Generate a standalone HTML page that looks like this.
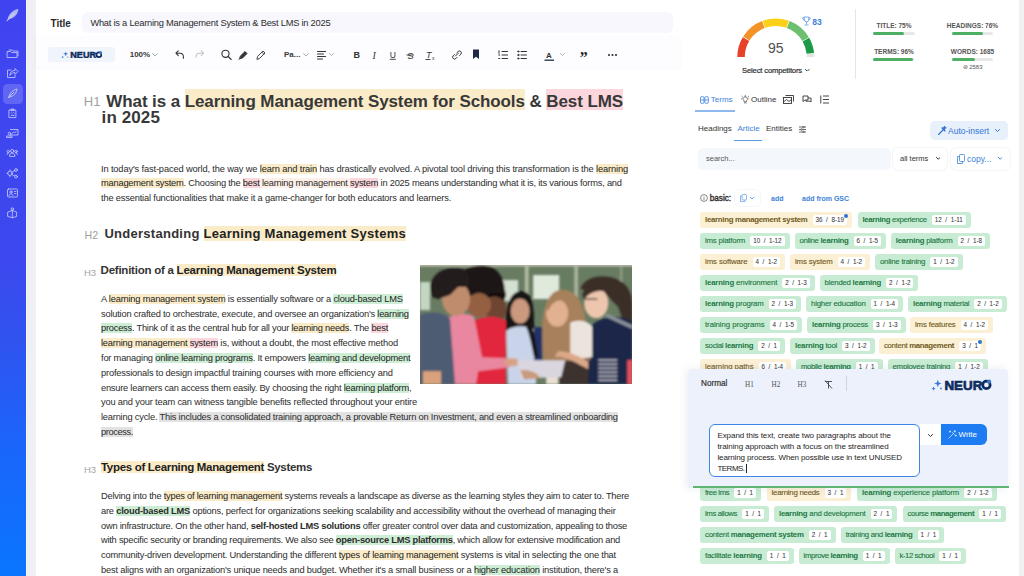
<!DOCTYPE html><html><head><meta charset="utf-8"><style>
*{margin:0;padding:0;box-sizing:border-box}
html,body{width:1024px;height:576px;overflow:hidden;background:#fff;font-family:'Liberation Sans',sans-serif;}
.a{position:absolute}
.bt{position:absolute;white-space:nowrap;font-size:9.3px;line-height:10px;color:#2c2c2c}
.hy{background:#fbecc9;color:#222}
.hg{background:#cdeed5;color:#222}
.hp{background:#fbd6dc;color:#222}
.hl{background:#fdf0e8}
.hs{background:#e2e2e2}
.hb{font-weight:bold}
.hgb{font-weight:bold;background:#cdeed5}
.hd{position:absolute;white-space:nowrap;font-weight:bold;color:#333}
.h1{font-size:17px;line-height:21px}
.h1{color:#383838}
.h1 .hy,.h1 .hp{padding-top:2.5px;background-repeat:no-repeat;background-size:100% calc(100% - 1px)}
.h1 .hy{background-color:transparent;background-image:linear-gradient(#fbecc9,#fbecc9);color:#383838}
.h1 .hp{background-color:transparent;background-image:linear-gradient(#fbd6dc,#fbd6dc);color:#383838}
.h2{font-size:13px;line-height:16px}
.h3{font-size:11.5px;line-height:14px}
.lab{position:absolute;color:#a9a9a9;white-space:nowrap}
.chip{position:absolute;height:16px;border-radius:3px;white-space:nowrap}
.chip .lb{position:absolute;left:5px;top:0;line-height:16px;font-size:7.8px;-webkit-text-stroke:0.12px currentColor}
.chip .lb .hb{-webkit-text-stroke:0}
.chip .ct{position:absolute;right:5px;top:3px;height:9.5px;line-height:9.5px;background:#fff;border-radius:2px;font-size:6.3px;color:#3a3a3a;padding:0 3px;-webkit-text-stroke:0.05px #333;word-spacing:1.8px}
.cy{background:#fbefd4}
.cy .lb{color:#6f5a1c}
.cg{background:#c8ebd3}
.cg .lb{color:#217843}
.dot{position:absolute;width:4px;height:4px;border-radius:2px;background:#2f72d8}
</style></head><body>
<div class="a" style="left:0;top:0;width:26px;height:576px;background:linear-gradient(180deg,#4044f0 0%,#3d48ee 45%,#2f54f0 60%,#1a66fb 78%,#0a76fe 100%)"></div>
<div class="a" style="left:26px;top:0;width:10px;height:576px;background:#eff0f4"></div>
<div class="a" style="left:26px;top:0;width:1px;height:576px;background:#f4f6fb"></div>
<div class="a" style="left:3px;top:84px;width:19.5px;height:19.5px;border-radius:4.5px;background:rgba(255,255,255,0.18)"></div>
<svg class="a" style="left:0;top:0" width="26" height="230" viewBox="0 0 26 230">
<g fill="none" stroke="#dfe4ff" stroke-width="0.75" stroke-linecap="round" stroke-linejoin="round" opacity="0.92">
<!-- top feather logo filled -->
<path d="M7.8 19.8 C8.5 15.5 11.5 11 18 9.3 C17.6 13.8 14.8 17.5 9.8 18.6 Z" fill="#b8c2ea" stroke="#d5dcfa" stroke-width="0.5"/>
<path d="M6.8 21 L14.5 13.2" stroke="#eef1ff" stroke-width="0.9"/>
<!-- folder -->
<path d="M7.5 51.5 h3 l1 1 h5.5 v5 h-9.5 z"/>
<path d="M9 50 h3 l1 1 h5 v5"/>
<!-- share -->
<path d="M11 70 h-3.5 v7.5 h7.5 v-2"/>
<path d="M10 75 c0-3 2-4.5 5-4.5 v-2 l3 3 -3 3 v-2 c-2 0-3.5 1-5 2.5z"/>
<!-- feather active -->
<path d="M9 97 C9.5 93.5 12.5 90 17 89 C16.5 93 14 96 10.5 96.8 Z"/>
<path d="M8.3 97.8 L13.8 92.2"/>
<!-- clipboard -->
<path d="M9.3 110 h6.6 v7.6 h-6.6 z"/>
<path d="M11.3 109 h2.6 v1.6 h-2.6 z"/>
<path d="M11.2 112.6 l.8 .8 M13.6 112.6 l.6 .6 M11.2 115.4 h3"/>
<!-- presentation -->
<path d="M10.5 129.5 h7.5 v5.5 h-7.5"/>
<path d="M12 133.5 l1.5-1.5 1 1 2-2"/>
<circle cx="9.5" cy="133.5" r="1.3"/>
<path d="M7 137.5 h5 v-1.5 h-5 z"/>
<!-- people -->
<circle cx="12.2" cy="151" r="1.6"/>
<circle cx="8.3" cy="151.5" r="1.2"/>
<circle cx="16.1" cy="151.5" r="1.2"/>
<path d="M9.5 156 c0-2 1.2-2.8 2.7-2.8 s2.7 .8 2.7 2.8 z"/>
<path d="M7 154.5 c0-1 .6-1.5 1.5-1.5 M17.4 154.5 c0-1-.6-1.5-1.5-1.5"/>
<!-- network -->
<circle cx="10" cy="173.3" r="2.2"/>
<circle cx="16" cy="170" r="1.4"/>
<circle cx="16" cy="176.6" r="1.4"/>
<path d="M11.8 172.2 L14.7 170.6 M11.8 174.4 L14.7 176 M7 173.3 h.8 M10 169.8 v.8 M10 176 v.8"/>
<!-- id card -->
<rect x="7.5" y="189" width="10" height="8" rx="1"/>
<circle cx="11" cy="192" r="1.2"/>
<path d="M9 195.5 c.5-1.2 1-1.6 2-1.6 s1.5 .4 2 1.6 M14.5 191.5 h1.5 M14.5 193.5 h1.5"/>
<!-- box person -->
<circle cx="12.3" cy="209" r="1.2"/>
<path d="M8 212 l4.3-1.5 4.3 1.5 v4.5 l-4.3 1.2 -4.3-1.2 z M12.3 210.5 v7.2"/>
</g></svg>
<div class="a" style="left:50.5px;top:18px;font-size:10px;line-height:11px;font-weight:bold;color:#2a2a2a">Title</div>
<div class="a" style="left:81.7px;top:12px;width:591px;height:21px;border-radius:6px;background:#f7f7fd"></div>
<div id="title" class="bt" style="left:90.4px;top:18.20px;letter-spacing:-0.231px">What is a Learning Management System &amp; Best LMS in 2025</div>
<div class="a" style="left:36px;top:37px;width:644px;height:30px;background:#fdfdff;box-shadow:0 1px 3px rgba(150,160,190,0.10)"></div>
<div class="a" style="left:48px;top:47px;width:66.7px;height:14.5px;border-radius:3px;background:#f0f4fb"></div>
<svg class="a" style="left:60.8px;top:50.78px" width="41.4" height="7.4399999999999995" viewBox="0 0 62 12" preserveAspectRatio="none">
<path d="M7 0.8 L8 3.6 L10.8 4.6 L8 5.6 L7 8.4 L6 5.6 L3.2 4.6 L6 3.6Z" fill="#3b7ad6"/>
<path d="M2.6 7.6 L3.2 9.2 L4.8 9.8 L3.2 10.4 L2.6 12 L2 10.4 L0.4 9.8 L2 9.2Z" fill="#3b7ad6"/>
<circle cx="10.2" cy="9.6" r="0.9" fill="#3b7ad6"/>
<text x="13.8" y="11" font-family="Liberation Sans" font-weight="bold" font-size="13.7" fill="#0e2c5e" stroke="#0e2c5e" stroke-width="0.7">NEUR</text>
<circle cx="56.8" cy="6" r="3.8" fill="none" stroke="#0e2c5e" stroke-width="2.8"/>
<circle cx="59.6" cy="2.6" r="2.1" fill="#3b7ad6"/>
</svg>
<div class="a" style="left:129.7px;top:50px;font-size:8px;line-height:10px;font-weight:bold;color:#3a3a3a">100%</div>
<svg class="a" style="left:151.5px;top:53.3px" width="6" height="3.5999999999999996" viewBox="0 0 10 6"><path d="M1 1 L5 5 L9 1" fill="none" stroke="#999" stroke-width="1.3333333333333333" stroke-linecap="round" stroke-linejoin="round"/></svg>
<svg class="a" style="left:0;top:40px" width="680" height="30" viewBox="0 40 680 30">
<g fill="none" stroke="#333" stroke-width="1" stroke-linecap="round" stroke-linejoin="round">
<!-- undo -->
<path d="M178.3 50.8 l-2.4 2.4 2.4 2.4 M176 53.2 h4.2 a3.2 3.2 0 0 1 3.2 3.2 v1.8" stroke-width="1.05"/>
<!-- redo -->
<path d="M201.2 50.8 l2.4 2.4 -2.4 2.4 M203.5 53.2 h-4.2 a3.2 3.2 0 0 0 -3.2 3.2 v.8" stroke="#c4c4c4" stroke-width="1.05"/>
<!-- search -->
<circle cx="225.5" cy="53.8" r="3.6" stroke-width="1.1"/>
<path d="M228.2 56.5 l3 3" stroke-width="1.1"/>
<!-- marker -->
<path d="M239 59.5 l1.5-1.5 M240.5 56 l4.5-4.5 2 2 -4.5 4.5 -2.5 .5z" fill="#333"/>
<!-- pencil -->
<path d="M257 59 l.6-2.6 5.4-5.4 2 2 -5.4 5.4z M261.8 52.2 l2 2" stroke="#444"/>
<!-- align -->
<path d="M317.5 51.5 h8 M317.5 54 h6 M317.5 56.5 h8 M317.5 59 h5" stroke-width="1.1"/>
<!-- link -->
<path d="M455.5 56 l3-3 M454.5 54.5 l-1.3 1.3 a1.9 1.9 0 0 0 2.7 2.7 l1.3-1.3 M459.5 55.5 l1.3-1.3 a1.9 1.9 0 0 0 -2.7 -2.7 l-1.3 1.3" stroke-width="1"/>
<!-- ordered list -->
<path d="M502 51.5 h5.5 M502 55 h5.5 M502 58.5 h5.5 M499 50.8 v2.5 M498.7 55 h1 M498.7 58.5 h1" stroke-width="1"/>
<!-- bullet list -->
<path d="M521 51.5 h5.5 M521 55 h5.5 M521 58.5 h5.5" stroke-width="1"/>
<circle cx="518.3" cy="51.5" r=".6" fill="#333"/><circle cx="518.3" cy="55" r=".6" fill="#333"/><circle cx="518.3" cy="58.5" r=".6" fill="#333"/>
</g>
<!-- bookmark -->
<path d="M473 49.5 h6 v9.5 l-3-2.3 -3 2.3z" fill="#1f2a44"/>
<!-- B I U S Tx -->
<text x="353.5" y="58.3" font-family="Liberation Sans" font-weight="bold" font-size="9" fill="#333">B</text>
<text x="372.5" y="58.5" font-family="Liberation Serif" font-style="italic" font-size="10" fill="#333">I</text>
<text x="389.8" y="57.5" font-family="Liberation Sans" font-size="8.5" fill="#333">U</text>
<path d="M389.8 59.3 h6" stroke="#333" stroke-width="0.9"/>
<text x="407.3" y="58.5" font-family="Liberation Sans" font-size="9.5" fill="#333">S</text>
<path d="M406.5 55 h7.5" stroke="#333" stroke-width="0.9"/>
<text x="426" y="57.5" font-family="Liberation Sans" font-style="italic" font-size="9" fill="#333">T</text>
<text x="432" y="59.5" font-family="Liberation Sans" font-size="5" fill="#333">x</text>
<path d="M425.5 59.5 h5" stroke="#333" stroke-width="0.9"/>
<!-- text color A -->
<text x="546" y="58" font-family="Liberation Sans" font-weight="bold" font-size="8" fill="#333">A</text>
<path d="M544.5 60.2 h9.5" stroke="#1f2a44" stroke-width="1.3"/>
<!-- quote -->
<text x="579.8" y="63" font-family="Liberation Serif" font-weight="bold" font-size="16" fill="#222">&#8221;</text>
<!-- more -->
<circle cx="609" cy="55" r="1.1" fill="#333"/><circle cx="612.5" cy="55" r="1.1" fill="#333"/><circle cx="616" cy="55" r="1.1" fill="#333"/>
</svg>
<div class="a" style="left:284px;top:50px;font-size:8px;line-height:10px;font-weight:bold;color:#3a3a3a">Pa...</div>
<svg class="a" style="left:303px;top:53.3px" width="6" height="3.5999999999999996" viewBox="0 0 10 6"><path d="M1 1 L5 5 L9 1" fill="none" stroke="#999" stroke-width="1.3333333333333333" stroke-linecap="round" stroke-linejoin="round"/></svg>
<svg class="a" style="left:329px;top:53.3px" width="5" height="3.0" viewBox="0 0 10 6"><path d="M1 1 L5 5 L9 1" fill="none" stroke="#999" stroke-width="1.6" stroke-linecap="round" stroke-linejoin="round"/></svg>
<svg class="a" style="left:559.5px;top:53.3px" width="5" height="3.0" viewBox="0 0 10 6"><path d="M1 1 L5 5 L9 1" fill="none" stroke="#999" stroke-width="1.6" stroke-linecap="round" stroke-linejoin="round"/></svg>
<div class="lab" style="left:83.8px;top:96px;font-size:13px;line-height:12px;color:#a0a0a0">H1</div>
<div id="h1a" class="hd h1" style="left:106.3px;top:90.50px;letter-spacing:-0.097px">What is a <span class="hy">Learning Management System for Schools</span> &amp; <span class="hp">Best LMS</span></div>
<div id="h1b" class="hd h1" style="left:101.6px;top:107.00px;letter-spacing:0.105px">in 2025</div>
<div id="p1_0" class="bt" style="left:101px;top:163.75px;letter-spacing:-0.144px">In today's fast-paced world, the way we <span class="hy">learn and train</span> has drastically evolved. A pivotal tool driving this transformation is the <span class="hy">learning</span></div>
<div id="p1_1" class="bt" style="left:101px;top:177.80px;letter-spacing:-0.219px"><span class="hy">management system</span>. Choosing the <span class="hp">best</span><span class="hl"> learning management </span><span class="hp">system</span> in 2025 means understanding what it is, its various forms, and</div>
<div id="p1_2" class="bt" style="left:101px;top:192.80px;letter-spacing:-0.182px">the essential functionalities that make it a game-changer for both educators and learners.</div>
<div class="lab" style="left:84.5px;top:230px;font-size:10.6px;line-height:10px;color:#a0a0a0">H2</div>
<div id="h2" class="hd h2" style="left:104.4px;top:225.70px;letter-spacing:0.273px">Understanding <span class="hy">Learning Management Systems</span></div>
<div class="lab" style="left:84px;top:267.8px;font-size:9.5px;line-height:9px;color:#a4a4a4">H3</div>
<div id="h3a" class="hd h3" style="left:100.6px;top:263.00px;letter-spacing:-0.241px">Definition of a <span class="hy">Learning Management System</span></div>
<div id="p2_0" class="bt" style="left:101px;top:293.80px;letter-spacing:-0.207px">A <span class="hy">learning management system</span> is essentially software or a <span class="hg">cloud-based LMS</span></div>
<div id="p2_1" class="bt" style="left:101px;top:308.60px;letter-spacing:-0.214px">solution crafted to orchestrate, execute, and oversee an organization's <span class="hg">learning</span></div>
<div id="p2_2" class="bt" style="left:101px;top:323.40px;letter-spacing:-0.235px"><span class="hg">process</span>. Think of it as the central hub for all your <span class="hy">learning needs</span>. The <span class="hp">best</span></div>
<div id="p2_3" class="bt" style="left:101px;top:338.20px;letter-spacing:-0.192px"><span class="hy">learning management </span><span class="hp">system</span> is, without a doubt, the most effective method</div>
<div id="p2_4" class="bt" style="left:101px;top:353.00px;letter-spacing:-0.204px">for managing <span class="hg">online learning programs</span>. It empowers <span class="hg">learning and development</span></div>
<div id="p2_5" class="bt" style="left:101px;top:367.80px;letter-spacing:-0.181px">professionals to design impactful training courses with more efficiency and</div>
<div id="p2_6" class="bt" style="left:101px;top:382.60px;letter-spacing:-0.234px">ensure learners can access them easily. By choosing the right <span class="hg">learning platform</span>,</div>
<div id="p2_7" class="bt" style="left:101px;top:397.40px;letter-spacing:-0.178px">you and your team can witness tangible benefits reflected throughout your entire</div>
<div id="p2_8" class="bt" style="left:101px;top:412.20px;letter-spacing:-0.210px">learning cycle. <span class="hs">This includes a consolidated training approach, a provable Return on Investment, and even a streamlined onboarding</span></div>
<div id="p2_9" class="bt" style="left:101px;top:427.00px;letter-spacing:-0.393px"><span class="hs">process.</span></div>
<div class="lab" style="left:84px;top:465px;font-size:9.5px;line-height:9px;color:#a4a4a4">H3</div>
<div id="h3b" class="hd h3" style="left:101px;top:460.20px;letter-spacing:-0.310px"><span class="hy">Types of Learning Management</span> Systems</div>
<div id="p3_0" class="bt" style="left:101px;top:491.25px;letter-spacing:-0.233px">Delving into the <span class="hy">types of learning management</span> systems reveals a landscape as diverse as the learning styles they aim to cater to. There</div>
<div id="p3_1" class="bt" style="left:101px;top:506.00px;letter-spacing:-0.206px">are <span class="hgb">cloud-based LMS</span> options, perfect for organizations seeking scalability and accessibility without the overhead of managing their</div>
<div id="p3_2" class="bt" style="left:101px;top:520.70px;letter-spacing:-0.242px">own infrastructure. On the other hand, <span class="hb">self-hosted LMS solutions</span> offer greater control over data and customization, appealing to those</div>
<div id="p3_3" class="bt" style="left:101px;top:535.40px;letter-spacing:-0.247px">with specific security or branding requirements. We also see <span class="hgb">open-source LMS platforms</span>, which allow for extensive modification and</div>
<div id="p3_4" class="bt" style="left:101px;top:550.10px;letter-spacing:-0.193px">community-driven development. Understanding the different <span class="hy">types of learning management</span> systems is vital in selecting the one that</div>
<div id="p3_5" class="bt" style="left:101px;top:564.80px;letter-spacing:-0.181px">best aligns with an organization's unique needs and budget. Whether it's a small business or a <span class="hg">higher education</span> institution, there's a</div>
<svg class="a" style="left:420px;top:265.3px" width="212.3" height="119.2" viewBox="0 0 212 119" preserveAspectRatio="none">
<defs><filter id="bl" x="-5%" y="-5%" width="110%" height="110%"><feGaussianBlur stdDeviation="1.1"/></filter></defs>
<rect width="212" height="119" fill="#687c62"/>
<g filter="url(#bl)">
<rect x="-2" y="-2" width="216" height="3.5" fill="#bdbcab"/>
<rect x="0" y="17" width="10" height="28" fill="#c4d6c2"/>
<rect x="82" y="15" width="16" height="21" fill="#d4e0d2"/>
<rect x="113" y="10" width="26" height="24" fill="#dfe9dc"/>
<rect x="104.7" y="1" width="3.8" height="60" fill="#b3bba3"/>
<rect x="154" y="1" width="3.8" height="55" fill="#aab39b"/>
<rect x="200" y="1" width="2" height="40" fill="#97a28a"/>
<!-- girl 6 -->
<path d="M160 24 C164 12 182 8 196 14 C206 18 212 26 212 40 L212 64 L204 60 L198 42 L186 30 Z" fill="#3b2e28"/>
<ellipse cx="176" cy="38" rx="12" ry="15" fill="#eec6ad"/>
<path d="M162 30 C166 16 184 12 194 20 L196 30 C184 24 172 24 164 34 Z" fill="#3b2e28"/>
<path d="M163 34 h14" stroke="#2a2a30" stroke-width="1.2"/>
<path d="M166 119 L168 64 C176 52 196 48 212 56 L212 119 Z" fill="#1f2848"/>
<path d="M186 50 L212 62" stroke="#8c929c" stroke-width="3.5"/>
<path d="M178 95 h19 M178 99 h19 M178 103 h19 M178 107 h19 M178 111 h19 M178 115 h19" stroke="#e6e2e6" stroke-width="1.3"/>
<rect x="207" y="95" width="5" height="24" fill="#e8505a"/>
<!-- girl 5 -->
<path d="M124 100 C120 70 120 34 136 26 C152 20 164 34 166 60 L170 95 L150 98 Z" fill="#a7805c"/>
<ellipse cx="137" cy="48" rx="11" ry="13.5" fill="#e2b192"/>
<path d="M126 44 C128 30 146 26 152 40 L148 38 C140 32 132 36 128 46 Z" fill="#a7805c"/>
<path d="M150 58 C156 54 168 55 172 62 L172 92 L150 94 Z" fill="#ece4dc"/>
<path d="M139 119 L140 96 L168 94 L168 119 Z" fill="#3c322e"/>
<path d="M134 92 C144 90 156 98 168 104 L168 96 C160 92 150 86 138 86 Z" fill="#dca888"/>
<rect x="126" y="104" width="12" height="15" fill="#eadfd4"/>
<!-- girl 4 light blue -->
<path d="M86 70 C84 46 88 28 100 26 C112 25 114 40 114 60 L116 92 L104 90 Z" fill="#171314"/>
<ellipse cx="100" cy="46" rx="9.5" ry="12.5" fill="#cb997d"/>
<path d="M88 119 L86 66 C92 60 106 60 114 64 L116 119 Z" fill="#c9d4ea"/>
<rect x="114" y="62" width="8" height="34" fill="#223066"/>
<path d="M106 62 C110 70 112 84 114 92 L118 92 C116 80 114 68 112 60 Z" fill="#171314"/>
<!-- girl 3 red -->
<ellipse cx="76" cy="44" rx="10.5" ry="13.5" fill="#6e4433"/>
<path d="M64 30 C68 14 84 14 86 30 L84 36 C78 30 70 30 66 36 Z" fill="#161111"/>
<path d="M50 119 L52 58 C58 50 78 50 86 56 L86 119 Z" fill="#e1253c"/>
<!-- boy 2 pink -->
<path d="M38 16 C40 2 56 -2 72 2 C82 8 86 20 84 28 L72 28 L56 32 L46 30 Z" fill="#1b1514"/>
<ellipse cx="59" cy="40" rx="12" ry="12" fill="#955f43"/>
<path d="M22 119 L22 60 C28 48 46 46 54 52 L62 92 L88 93 L90 102 L58 106 L56 119 Z" fill="#e8879f"/>
<ellipse cx="92" cy="97" rx="8" ry="4" fill="#d6a282"/>
<!-- boy 1 -->
<ellipse cx="36" cy="34" rx="14" ry="17" fill="#c08c6e"/>
<path d="M10 22 C12 6 28 0 44 4 C50 8 50 16 48 22 L38 22 L30 30 L18 34 L12 32 Z" fill="#221d1a"/>
<path d="M0 119 L0 50 C8 46 24 46 30 54 L35 119 Z" fill="#4e5b73"/>
<rect x="3" y="106" width="18" height="13" fill="#d9a27c"/>
<!-- tablet -->
<path d="M97 95 L145 95 L141 112 L100 113 Z" fill="#d9d6df"/>
<path d="M100 105 C110 104 118 108 120 113 L104 114 Z" fill="#c99a7c"/>
</g>
</svg>
<div class="a" style="left:1019px;top:0;width:5px;height:576px;background:#f1f1f4"></div>
<svg class="a" style="left:0;top:0" width="1024" height="100" viewBox="0 0 1024 100"><path d="M737.30 57.00 A38.5 38.5 0 0 1 742.80 37.17 L749.23 41.03 A31.0 31.0 0 0 0 744.80 57.00 Z" fill="#e8412a"/><path d="M743.15 36.60 A38.5 38.5 0 0 1 762.00 21.06 L764.69 28.06 A31.0 31.0 0 0 0 749.51 40.57 Z" fill="#f39227"/><path d="M762.63 20.82 A38.5 38.5 0 0 1 788.97 20.82 L786.40 27.87 A31.0 31.0 0 0 0 765.20 27.87 Z" fill="#fdd01a"/><path d="M789.60 21.06 A38.5 38.5 0 0 1 808.80 37.17 L802.37 41.03 A31.0 31.0 0 0 0 786.91 28.06 Z" fill="#6cbf6e"/><path d="M809.14 37.75 A38.5 38.5 0 0 1 814.09 52.98 L806.63 53.76 A31.0 31.0 0 0 0 802.65 41.50 Z" fill="#1c9a47"/><path d="M814.15 53.64 A38.5 38.5 0 0 1 814.30 57.00 L806.80 57.00 A31.0 31.0 0 0 0 806.68 54.30 Z" fill="#e3e3e3"/></svg>
<div class="a" style="left:755.8px;top:40px;width:40px;text-align:center;font-size:14px;line-height:16px;color:#505050">95</div>
<svg class="a" style="left:802px;top:16px" width="9" height="10" viewBox="0 0 9 10"><g fill="none" stroke="#5b9be6" stroke-width="0.8" stroke-linecap="round"><path d="M2.2 1 h4.6 v2.5 a2.3 2.3 0 0 1 -4.6 0z M2.2 1.8 h-1.5 a1.6 1.6 0 0 0 1.6 2.2 M6.8 1.8 h1.5 a1.6 1.6 0 0 1 -1.6 2.2 M4.5 6 v2 M2.8 9 h3.4"/></g></svg>
<div class="a" style="left:812.3px;top:17px;font-size:8.5px;line-height:10px;font-weight:bold;color:#3b7fd9">83</div>
<div id="selc" class="a" style="left:742px;top:65.50px;letter-spacing:-0.137px">Select competitors</div>
<style>#selc{font-size:7.6px;color:#2a2a2a;white-space:nowrap;-webkit-text-stroke:0.2px #2a2a2a}</style>
<svg class="a" style="left:805.2px;top:68.8px" width="4.5" height="2.6999999999999997" viewBox="0 0 10 6"><path d="M1 1 L5 5 L9 1" fill="none" stroke="#333" stroke-width="2.2222222222222223" stroke-linecap="round" stroke-linejoin="round"/></svg>
<div class="a" style="left:854.5px;top:9px;width:1px;height:70px;background:#e6e6ea"></div>
<div class="a" style="left:854px;top:21.5px;width:80px;text-align:center;font-size:6.5px;line-height:8px;font-weight:bold;color:#555">TITLE: 75%</div>
<div class="a" style="left:873px;top:31.7px;width:41.6px;height:3px;border-radius:1.5px;background:#e8e8ea"></div>
<div class="a" style="left:873px;top:31.7px;width:31px;height:3px;border-radius:1.5px;background:#4caf62"></div>
<div class="a" style="left:932.5px;top:21.5px;width:80px;text-align:center;font-size:6.5px;line-height:8px;font-weight:bold;color:#555">HEADINGS: 76%</div>
<div class="a" style="left:951.7px;top:31.7px;width:41.3px;height:3px;border-radius:1.5px;background:#e8e8ea"></div>
<div class="a" style="left:951.7px;top:31.7px;width:31.3px;height:3px;border-radius:1.5px;background:#4caf62"></div>
<div class="a" style="left:854px;top:47.8px;width:80px;text-align:center;font-size:6.5px;line-height:8px;font-weight:bold;color:#555">TERMS: 96%</div>
<div class="a" style="left:873px;top:57.8px;width:41px;height:3px;border-radius:1.5px;background:#e8e8ea"></div>
<div class="a" style="left:873px;top:57.8px;width:40px;height:3px;border-radius:1.5px;background:#4caf62"></div>
<div class="a" style="left:932.5px;top:47.8px;width:80px;text-align:center;font-size:6.5px;line-height:8px;font-weight:bold;color:#555">WORDS: 1685</div>
<div class="a" style="left:951.7px;top:57.8px;width:41.3px;height:3px;border-radius:1.5px;background:#e8e8ea"></div>
<div class="a" style="left:951.7px;top:57.8px;width:23.3px;height:3px;border-radius:1.5px;background:#4caf62"></div>
<div class="a" style="left:962.5px;top:62.5px;font-size:6px;line-height:8px;color:#555">&#8856; 2583</div>
<svg class="a" style="left:699.5px;top:96px" width="9" height="8" viewBox="0 0 9 8"><g fill="none" stroke="#3b82d9" stroke-width="0.8"><rect x="0.5" y="0.5" width="3.5" height="7" rx="1.5"/><rect x="4.8" y="0.5" width="3.5" height="7" rx="1.5"/><path d="M0.5 4 h3.5 M4.8 4 h3.5"/></g></svg>
<div class="a" style="left:710.8px;top:95px;font-size:8px;line-height:10px;color:#3b82d9">Terms</div>
<div class="a" style="left:695px;top:110px;width:39.6px;height:1.5px;background:#8fb8ee"></div>
<svg class="a" style="left:740.8px;top:95.3px" width="8.5" height="8.5" viewBox="0 0 10 10"><g fill="none" stroke="#444" stroke-width="0.8" stroke-linecap="round"><path d="M5 2 a2.6 2.6 0 0 0 -1.5 4.7 v1.3 h3 v-1.3 A2.6 2.6 0 0 0 5 2 M4 9.3 h2 M5 0.2 v.8 M1 1.5 l.7.6 M9 1.5 l-.7.6 M0.2 4.5 h.8 M9.8 4.5 h-.8"/></g></svg>
<div class="a" style="left:751px;top:95px;font-size:8px;line-height:10px;color:#333">Outline</div>
<svg class="a" style="left:782.5px;top:95px" width="11" height="9" viewBox="0 0 11 9"><g fill="none" stroke="#333" stroke-width="0.9"><rect x="0.5" y="2.5" width="8" height="6" /><path d="M2.5 0.5 h8 v6"/><path d="M0.5 7 l3-2.5 2.5 2 3-2.5" /></g></svg>
<svg class="a" style="left:801.5px;top:95px" width="10" height="9" viewBox="0 0 10 9"><g fill="none" stroke="#333" stroke-width="0.9" stroke-linejoin="round"><path d="M1 1 h5 v4 h-3 l-2 1.5z M6 3 h3 v4 l-1 -.8 h-4 v-1.2"/></g></svg>
<svg class="a" style="left:819.5px;top:95px" width="9" height="9" viewBox="0 0 9 9"><g fill="none" stroke="#333" stroke-width="0.9"><path d="M3 1 h6 M3 4.5 h6 M3 8 h6 M0.8 0.5 v8"/></g></svg>
<div class="a" style="left:698px;top:124px;font-size:8px;line-height:10px;color:#333">Headings</div>
<div class="a" style="left:737.5px;top:124px;font-size:8px;line-height:10px;color:#3b82d9">Article</div>
<div class="a" style="left:734px;top:139.5px;width:28px;height:1.2px;background:#5a98e0"></div>
<div class="a" style="left:766px;top:124px;font-size:8px;line-height:10px;color:#333">Entities</div>
<svg class="a" style="left:798.5px;top:125.5px" width="7" height="7" viewBox="0 0 7 7"><g fill="none" stroke="#444" stroke-width="0.8"><path d="M0 1 h7 M0 3.5 h7 M0 6 h7"/><circle cx="4.5" cy="1" r=".8" fill="#fff"/><circle cx="2.5" cy="3.5" r=".8" fill="#fff"/><circle cx="4.5" cy="6" r=".8" fill="#fff"/></g></svg>
<div class="a" style="left:930px;top:121px;width:78px;height:19px;border-radius:5px;background:#e8f0fb"></div>
<svg class="a" style="left:937.5px;top:126px" width="9" height="9" viewBox="0 0 9 9"><path d="M0.5 8.5 L5 4 M4 2 l3 3 M6.5 0.5 l.4 1 1 .4 -1 .4 -.4 1 -.4-1 -1-.4 1-.4z" fill="#2f76d8" stroke="#2f76d8" stroke-width="1.2" stroke-linecap="round"/></svg>
<div class="a" style="left:948px;top:125.5px;font-size:8.5px;line-height:10px;color:#2f76d8">Auto-insert</div>
<svg class="a" style="left:994.5px;top:128.8px" width="5" height="3.0" viewBox="0 0 10 6"><path d="M1 1 L5 5 L9 1" fill="none" stroke="#2f76d8" stroke-width="2.0" stroke-linecap="round" stroke-linejoin="round"/></svg>
<div class="a" style="left:698px;top:148px;width:192.5px;height:21.5px;border-radius:5px;background:#f4f7fc"></div>
<div class="a" style="left:706px;top:154px;font-size:7.5px;line-height:10px;color:#555">search...</div>
<div class="a" style="left:893px;top:148px;width:54px;height:21.5px;border-radius:5px;background:#fff;box-shadow:0 0 0 0.6px #eceef2"></div>
<div class="a" style="left:900px;top:154px;font-size:7.5px;line-height:10px;color:#333">all terms</div>
<svg class="a" style="left:935.5px;top:157.2px" width="4.5" height="2.6999999999999997" viewBox="0 0 10 6"><path d="M1 1 L5 5 L9 1" fill="none" stroke="#333" stroke-width="2.2222222222222223" stroke-linecap="round" stroke-linejoin="round"/></svg>
<div class="a" style="left:950.7px;top:148px;width:59.3px;height:21.5px;border-radius:5px;background:#fff;box-shadow:0 0 0 0.6px #eceef2"></div>
<svg class="a" style="left:957px;top:153.5px" width="8" height="10" viewBox="0 0 8 10"><g fill="none" stroke="#3b82d9" stroke-width="0.8"><rect x="2.5" y="0.5" width="5" height="7" rx="1"/><path d="M2.5 2.5 h-2 v7 h5 v-2"/></g></svg>
<div class="a" style="left:967px;top:153.8px;font-size:8.5px;line-height:10px;color:#3b82d9">copy...</div>
<svg class="a" style="left:997.5px;top:157.2px" width="4.5" height="2.6999999999999997" viewBox="0 0 10 6"><path d="M1 1 L5 5 L9 1" fill="none" stroke="#3b82d9" stroke-width="2.2222222222222223" stroke-linecap="round" stroke-linejoin="round"/></svg>
<svg class="a" style="left:700px;top:194px" width="8" height="8" viewBox="0 0 8 8"><g fill="none" stroke="#555" stroke-width="0.7"><circle cx="4" cy="4" r="3.4"/><path d="M4 3.3 v2.8 M4 2 v.5"/></g></svg>
<div class="a" style="left:709.7px;top:194px;font-size:8.2px;line-height:10px;color:#2a2a2a;-webkit-text-stroke:0.35px #2a2a2a">basic:</div>
<div class="a" style="left:735px;top:190px;width:25px;height:16px;border-radius:4px;background:#fff;box-shadow:0 0 0 0.6px #eef0f4"></div>
<svg class="a" style="left:740px;top:194px" width="7" height="8" viewBox="0 0 7 8"><g fill="none" stroke="#5b9be6" stroke-width="0.7"><rect x="2" y="0.5" width="4.5" height="5.5" rx="1"/><path d="M2 2 h-1.5 v5.5 h4.5 v-1.5"/></g></svg>
<svg class="a" style="left:750px;top:197px" width="4" height="2.4" viewBox="0 0 10 6"><path d="M1 1 L5 5 L9 1" fill="none" stroke="#5b9be6" stroke-width="2.5" stroke-linecap="round" stroke-linejoin="round"/></svg>
<div class="a" style="left:771px;top:193.5px;font-size:7px;line-height:10px;font-weight:bold;color:#3b82d9">add</div>
<div class="a" style="left:802px;top:193.5px;font-size:7px;line-height:10px;font-weight:bold;color:#3b82d9">add from GSC</div>
<div class="chip cy" style="left:700px;top:212px;width:152.0px"><span class="lb" id="ch0" style="letter-spacing:-0.273px"><span class="hb">learning management system</span></span><span class="ct">36 / 8-19</span><span class="dot" style="right:4px;top:1.5px"></span></div>
<div class="chip cg" style="left:857.5px;top:212px;width:113.3px"><span class="lb" id="ch1" style="letter-spacing:-0.334px"><span class="hb">learning</span> experience</span><span class="ct">12 / 1-11</span></div>
<div class="chip cg" style="left:700px;top:233px;width:89.6px"><span class="lb" id="ch2" style="letter-spacing:-0.195px">lms platform</span><span class="ct">10 / 1-12</span></div>
<div class="chip cg" style="left:794.5px;top:233px;width:91.5px"><span class="lb" id="ch3" style="letter-spacing:-0.285px">online <span class="hb">learning</span></span><span class="ct">6 / 1-5</span></div>
<div class="chip cg" style="left:890.8px;top:233px;width:99.2px"><span class="lb" id="ch4" style="letter-spacing:-0.231px"><span class="hb">learning</span> platform</span><span class="ct">2 / 1-8</span></div>
<div class="chip cy" style="left:700px;top:254px;width:85.0px"><span class="lb" id="ch5" style="letter-spacing:-0.102px">lms software</span><span class="ct">4 / 1-2</span></div>
<div class="chip cy" style="left:790px;top:254px;width:80.0px"><span class="lb" id="ch6" style="letter-spacing:-0.145px">lms system</span><span class="ct">4 / 1-2</span></div>
<div class="chip cg" style="left:875px;top:254px;width:87.6px"><span class="lb" id="ch7" style="letter-spacing:-0.228px">online training</span><span class="ct">1 / 1-2</span></div>
<div class="chip cg" style="left:700px;top:275px;width:114.7px"><span class="lb" id="ch8" style="letter-spacing:-0.159px"><span class="hb">learning</span> environment</span><span class="ct">2 / 1-3</span></div>
<div class="chip cg" style="left:819.6px;top:275px;width:98.9px"><span class="lb" id="ch9" style="letter-spacing:-0.239px">blended <span class="hb">learning</span></span><span class="ct">2 / 1-2</span></div>
<div class="chip cg" style="left:700px;top:296px;width:101.0px"><span class="lb" id="ch10" style="letter-spacing:-0.187px"><span class="hb">learning</span> program</span><span class="ct">2 / 1-3</span></div>
<div class="chip cg" style="left:806px;top:296px;width:97.0px"><span class="lb" id="ch11" style="letter-spacing:-0.195px">higher education</span><span class="ct">1 / 1-4</span></div>
<div class="chip cg" style="left:908px;top:296px;width:98.7px"><span class="lb" id="ch12" style="letter-spacing:-0.236px"><span class="hb">learning</span> material</span><span class="ct">2 / 1-2</span></div>
<div class="chip cg" style="left:700px;top:317px;width:102.0px"><span class="lb" id="ch13" style="letter-spacing:-0.067px">training programs</span><span class="ct">4 / 1-5</span></div>
<div class="chip cg" style="left:807px;top:317px;width:98.5px"><span class="lb" id="ch14" style="letter-spacing:-0.236px"><span class="hb">learning</span> process</span><span class="ct">3 / 1-3</span></div>
<div class="chip cy" style="left:910px;top:317px;width:83.0px"><span class="lb" id="ch15" style="letter-spacing:-0.160px">lms features</span><span class="ct">4 / 1-2</span></div>
<div class="chip cg" style="left:700px;top:338px;width:85.0px"><span class="lb" id="ch16" style="letter-spacing:-0.287px">social <span class="hb">learning</span></span><span class="ct">2 / 1</span></div>
<div class="chip cg" style="left:790px;top:338px;width:84.5px"><span class="lb" id="ch17" style="letter-spacing:-0.233px"><span class="hb">learning</span> tool</span><span class="ct">3 / 1-2</span></div>
<div class="chip cy" style="left:879px;top:338px;width:107.0px"><span class="lb" id="ch18" style="letter-spacing:-0.318px">content <span class="hb">management</span></span><span class="ct">3 / 1</span><span class="dot" style="right:4px;top:1.5px"></span></div>
<div class="chip cy" style="left:700px;top:359px;width:91.0px"><span class="lb" id="ch19" style="letter-spacing:-0.032px">learning paths</span><span class="ct">6 / 1-4</span></div>
<div class="chip cg" style="left:796px;top:359px;width:86.6px"><span class="lb" id="ch20" style="letter-spacing:-0.383px">mobile <span class="hb">learning</span></span><span class="ct">1 / 1</span></div>
<div class="chip cg" style="left:887.5px;top:359px;width:100.2px"><span class="lb" id="ch21" style="letter-spacing:-0.225px">employee training</span><span class="ct">1 / 1-2</span></div>
<div class="chip cg" style="left:700px;top:485px;width:61.0px"><span class="lb" id="ch22" style="letter-spacing:-0.449px">free lms</span><span class="ct">1 / 1</span></div>
<div class="chip cy" style="left:766.6px;top:485px;width:84.8px"><span class="lb" id="ch23" style="letter-spacing:-0.230px">learning needs</span><span class="ct">3 / 1</span></div>
<div class="chip cg" style="left:857px;top:485px;width:139.6px"><span class="lb" id="ch24" style="letter-spacing:-0.137px"><span class="hb">learning</span> experience platform</span><span class="ct">2 / 1-2</span></div>
<div class="chip cg" style="left:700px;top:506px;width:69.0px"><span class="lb" id="ch25" style="letter-spacing:-0.383px">lms allows</span><span class="ct">1 / 1</span></div>
<div class="chip cg" style="left:774px;top:506px;width:123.4px"><span class="lb" id="ch26" style="letter-spacing:-0.242px"><span class="hb">learning</span> and development</span><span class="ct">2 / 1</span></div>
<div class="chip cg" style="left:902.6px;top:506px;width:103.4px"><span class="lb" id="ch27" style="letter-spacing:-0.420px">course <span class="hb">management</span></span><span class="ct">1 / 1</span></div>
<div class="chip cg" style="left:700px;top:527px;width:135.5px"><span class="lb" id="ch28" style="letter-spacing:-0.250px">content <span class="hb">management system</span></span><span class="ct">2 / 1</span></div>
<div class="chip cg" style="left:840.7px;top:527px;width:103.7px"><span class="lb" id="ch29" style="letter-spacing:-0.306px">training and <span class="hb">learning</span></span><span class="ct">1 / 1</span></div>
<div class="chip cg" style="left:700px;top:548px;width:93.7px"><span class="lb" id="ch30" style="letter-spacing:-0.225px">facilitate <span class="hb">learning</span></span><span class="ct">1 / 1</span></div>
<div class="chip cg" style="left:798.6px;top:548px;width:91.0px"><span class="lb" id="ch31" style="letter-spacing:-0.381px">improve <span class="hb">learning</span></span><span class="ct">1 / 1</span></div>
<div class="chip cg" style="left:894.5px;top:548px;width:71.5px"><span class="lb" id="ch32" style="letter-spacing:-0.476px">k-12 school</span><span class="ct">1 / 1</span></div>
<div class="a" style="left:688px;top:369px;width:320px;height:118.5px;border-radius:4px 4px 0 0;background:#ecf1fb;box-shadow:-2px 0 8px rgba(120,140,180,0.16)"></div>
<div class="a" style="left:693px;top:486px;width:316px;height:1.8px;background:#5fb56f"></div>
<div class="a" style="left:701px;top:379px;font-size:8.2px;line-height:10px;color:#333;-webkit-text-stroke:0.2px #333">Normal</div>
<div class="a" style="left:745px;top:379.5px;font-size:7.2px;line-height:10px;color:#555;font-family:'Liberation Serif',serif">H1</div>
<div class="a" style="left:771.5px;top:379.5px;font-size:7.2px;line-height:10px;color:#555;font-family:'Liberation Serif',serif">H2</div>
<div class="a" style="left:797.5px;top:379.5px;font-size:7.2px;line-height:10px;color:#555;font-family:'Liberation Serif',serif">H3</div>
<svg class="a" style="left:824px;top:379.5px" width="9" height="9" viewBox="0 0 9 9"><g fill="none" stroke="#444" stroke-width="0.9"><path d="M1 1.5 h7 M4.5 1.5 v7 M1 0.5 l7 8"/></g></svg>
<div class="a" style="left:846px;top:376px;width:0.8px;height:15px;background:#cfd5e0"></div>
<svg class="a" style="left:931px;top:378.82px" width="60.5" height="11.760000000000002" viewBox="0 0 62 12" preserveAspectRatio="none">
<path d="M7 0.8 L8 3.6 L10.8 4.6 L8 5.6 L7 8.4 L6 5.6 L3.2 4.6 L6 3.6Z" fill="#3b7ad6"/>
<path d="M2.6 7.6 L3.2 9.2 L4.8 9.8 L3.2 10.4 L2.6 12 L2 10.4 L0.4 9.8 L2 9.2Z" fill="#3b7ad6"/>
<circle cx="10.2" cy="9.6" r="0.9" fill="#3b7ad6"/>
<text x="13.8" y="11" font-family="Liberation Sans" font-weight="bold" font-size="13.7" fill="#0e2c5e" stroke="#0e2c5e" stroke-width="0.7">NEUR</text>
<circle cx="56.8" cy="6" r="3.8" fill="none" stroke="#0e2c5e" stroke-width="2.8"/>
<circle cx="59.6" cy="2.6" r="2.1" fill="#3b7ad6"/>
</svg>
<div class="a" style="left:708.8px;top:424px;width:211.2px;height:52.6px;border-radius:6px;background:#fff;border:1px solid #3d86e6"></div>
<div id="ta0" class="a" style="left:717.4px;top:430.5px;font-size:8px;line-height:10px;color:#1e1e1e;white-space:nowrap;letter-spacing:-0.060px">Expand this text, create two paragraphs about the</div>
<div id="ta1" class="a" style="left:717.4px;top:441.5px;font-size:8px;line-height:10px;color:#1e1e1e;white-space:nowrap;letter-spacing:-0.064px">training approach with a focus on the streamlined</div>
<div id="ta2" class="a" style="left:717.4px;top:452.5px;font-size:8px;line-height:10px;color:#1e1e1e;white-space:nowrap;letter-spacing:-0.116px">learning process. When possible use in text UNUSED</div>
<div id="ta3" class="a" style="left:717.4px;top:463.5px;font-size:8px;line-height:10px;color:#1e1e1e;white-space:nowrap;letter-spacing:-0.505px">TERMS.</div>
<div class="a" style="left:746px;top:463.5px;width:0.8px;height:9px;background:#222"></div>
<div class="a" style="left:920px;top:424px;width:20.6px;height:21.4px;background:#fff"></div>
<svg class="a" style="left:927.8px;top:433.5px" width="5" height="3.0" viewBox="0 0 10 6"><path d="M1 1 L5 5 L9 1" fill="none" stroke="#333" stroke-width="2.0" stroke-linecap="round" stroke-linejoin="round"/></svg>
<div class="a" style="left:940.6px;top:424px;width:46.4px;height:21.4px;border-radius:0 6px 6px 0;background:#1d7cf2"></div>
<svg class="a" style="left:947.5px;top:430px" width="9" height="9" viewBox="0 0 9 9"><g fill="none" stroke="#dbe9ff" stroke-width="0.8" stroke-linecap="round"><path d="M0.8 8.2 L5.5 3.5 M4.5 2.5 l1.8 1.8 M6.8 0.5 v1.6 M6 1.3 h1.6 M2 1 v1.2 M1.4 1.6 h1.2 M7.8 5 v1.2 M7.2 5.6 h1.2"/></g></svg>
<div class="a" style="left:958.5px;top:429.7px;font-size:8px;line-height:10px;color:#fff">Write</div>
</body></html>
